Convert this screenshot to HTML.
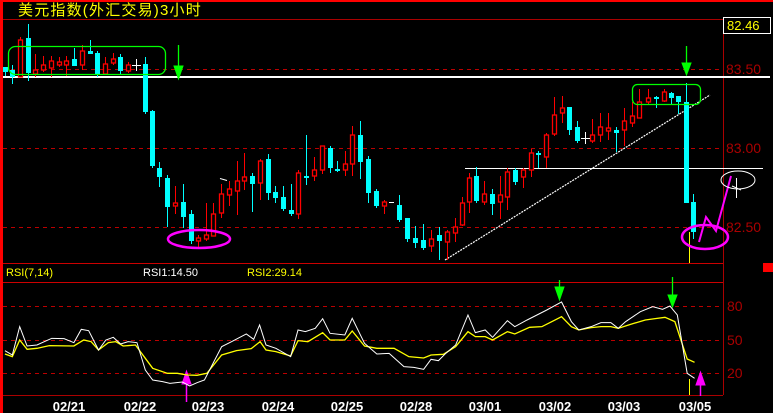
<!DOCTYPE html>
<html><head><meta charset="utf-8"><style>
html,body{margin:0;padding:0;background:#000;width:773px;height:413px;overflow:hidden}
svg{display:block}
text{font-family:"Liberation Sans","Noto Sans CJK SC",sans-serif}
</style></head><body>
<svg width="773" height="413" viewBox="0 0 773 413" xmlns="http://www.w3.org/2000/svg">
<rect width="773" height="413" fill="#000"/>
<rect x="0" y="0" width="773" height="2" fill="#f00"/>
<rect x="0" y="0" width="3" height="413" fill="#f00"/>
<line x1="3" y1="19.5" x2="723" y2="19.5" stroke="#a00" stroke-width="1"/>
<line x1="723.5" y1="19" x2="723.5" y2="395" stroke="#a00" stroke-width="1"/>
<line x1="3" y1="263.5" x2="723" y2="263.5" stroke="#c00" stroke-width="1"/>
<line x1="3" y1="282.5" x2="723" y2="282.5" stroke="#c00" stroke-width="1"/>
<line x1="3" y1="395.5" x2="723" y2="395.5" stroke="#a00" stroke-width="1"/>
<rect x="763" y="263" width="10" height="9" fill="#f00"/>
<g stroke="#b00" stroke-width="1" stroke-dasharray="4,4">
<line x1="3" y1="69.5" x2="723" y2="69.5"/>
<line x1="3" y1="148.5" x2="723" y2="148.5"/>
<line x1="3" y1="227.5" x2="723" y2="227.5"/>
<line x1="3" y1="306.5" x2="723" y2="306.5"/>
<line x1="3" y1="340.5" x2="723" y2="340.5"/>
<line x1="3" y1="373.5" x2="723" y2="373.5"/>
</g>
<text x="18" y="15" fill="#ff0" font-size="15" letter-spacing="1.2">美元指数(外汇交易)3小时</text>
<rect x="723.5" y="17.5" width="47" height="16" fill="#000" stroke="#fff" stroke-width="1"/>
<text x="727" y="30" fill="#ff0" font-size="13">82.46</text>
<g fill="#a00" font-size="14">
<text x="726" y="74">83.50</text><text x="726" y="153">83.00</text><text x="726" y="232">82.50</text>
<text x="727" y="311">80</text><text x="727" y="345">50</text><text x="727" y="378">20</text>
</g>
<rect x="3" y="76" width="767" height="2" fill="#fff"/>
<line x1="465" y1="168.5" x2="763" y2="168.5" stroke="#fff" stroke-width="1"/>
<line x1="445" y1="260" x2="710" y2="95" stroke="#fff" stroke-width="1.2" stroke-dasharray="2,1"/>
<g stroke="#0ff" stroke-width="1">
<line x1="5.5" y1="67" x2="5.5" y2="76"/><line x1="12.5" y1="65" x2="12.5" y2="84"/><line x1="28.5" y1="24" x2="28.5" y2="81"/>
<line x1="74.5" y1="48" x2="74.5" y2="66"/><line x1="90.5" y1="40" x2="90.5" y2="54"/><line x1="97.5" y1="51" x2="97.5" y2="77"/>
<line x1="120.5" y1="54" x2="120.5" y2="74"/><line x1="145.5" y1="57" x2="145.5" y2="114"/><line x1="152.5" y1="110" x2="152.5" y2="168"/>
<line x1="159.5" y1="162" x2="159.5" y2="187"/><line x1="167.5" y1="175" x2="167.5" y2="227"/><line x1="183.5" y1="184" x2="183.5" y2="228"/>
<line x1="191.5" y1="210" x2="191.5" y2="244"/><line x1="252.5" y1="173" x2="252.5" y2="212"/><line x1="268.5" y1="154" x2="268.5" y2="200"/>
<line x1="275.5" y1="186" x2="275.5" y2="203"/><line x1="283.5" y1="186" x2="283.5" y2="211"/><line x1="291.5" y1="184" x2="291.5" y2="216"/>
<line x1="306.5" y1="135" x2="306.5" y2="185"/><line x1="330.5" y1="146" x2="330.5" y2="173"/><line x1="337.5" y1="161" x2="337.5" y2="172"/>
<line x1="360.5" y1="121" x2="360.5" y2="179"/><line x1="368.5" y1="156" x2="368.5" y2="203"/><line x1="376.5" y1="189" x2="376.5" y2="208"/>
<line x1="399.5" y1="195" x2="399.5" y2="222"/><line x1="407.5" y1="218" x2="407.5" y2="242"/><line x1="415.5" y1="226" x2="415.5" y2="248"/>
<line x1="423.5" y1="224" x2="423.5" y2="250"/><line x1="439.5" y1="227" x2="439.5" y2="260"/><line x1="476.5" y1="167" x2="476.5" y2="203"/>
<line x1="492.5" y1="189" x2="492.5" y2="215"/><line x1="515.5" y1="168" x2="515.5" y2="185"/><line x1="538.5" y1="151" x2="538.5" y2="168"/>
<line x1="569.5" y1="107" x2="569.5" y2="135"/><line x1="577.5" y1="121" x2="577.5" y2="143"/><line x1="616.5" y1="127" x2="616.5" y2="152"/>
<line x1="656.5" y1="96" x2="656.5" y2="108"/><line x1="671.5" y1="92" x2="671.5" y2="105"/><line x1="678.5" y1="96" x2="678.5" y2="114"/>
<line x1="686.5" y1="83" x2="686.5" y2="203"/><line x1="693.5" y1="194" x2="693.5" y2="239"/>
</g>
<g fill="#0ff">
<rect x="3" y="67" width="5" height="5"/><rect x="10" y="70" width="5" height="7"/><rect x="26" y="38" width="5" height="35"/>
<rect x="72" y="59" width="5" height="7"/><rect x="88" y="51" width="5" height="3"/><rect x="95" y="53" width="5" height="21"/>
<rect x="118" y="57" width="5" height="14"/><rect x="143" y="64" width="5" height="48"/><rect x="150" y="111" width="5" height="55"/>
<rect x="157" y="168" width="5" height="9"/><rect x="165" y="178" width="5" height="29"/><rect x="181" y="202" width="5" height="15"/>
<rect x="189" y="214" width="5" height="27"/><rect x="250" y="176" width="5" height="8"/><rect x="266" y="159" width="5" height="34"/>
<rect x="273" y="192" width="5" height="6"/><rect x="281" y="197" width="5" height="12"/><rect x="289" y="210" width="5" height="4"/>
<rect x="304" y="176" width="5" height="2"/><rect x="328" y="148" width="5" height="20"/><rect x="335" y="169" width="5" height="2"/>
<rect x="358" y="135" width="5" height="27"/><rect x="366" y="159" width="5" height="34"/><rect x="374" y="191" width="5" height="15"/>
<rect x="397" y="205" width="5" height="15"/><rect x="405" y="218" width="5" height="21"/><rect x="413" y="238" width="5" height="5"/>
<rect x="421" y="240" width="5" height="8"/><rect x="437" y="235" width="5" height="6"/><rect x="474" y="176" width="5" height="25"/>
<rect x="490" y="194" width="5" height="10"/><rect x="513" y="170" width="5" height="12"/><rect x="536" y="153" width="5" height="2"/>
<rect x="567" y="107" width="5" height="23"/><rect x="575" y="127" width="5" height="14"/><rect x="614" y="130" width="5" height="3"/>
<rect x="654" y="97" width="5" height="2"/><rect x="669" y="93" width="5" height="5"/><rect x="676" y="96" width="5" height="6"/>
<rect x="684" y="102" width="5" height="101"/><rect x="691" y="202" width="5" height="30"/>
</g>
<g stroke="#f00" stroke-width="1">
<line x1="20.5" y1="37" x2="20.5" y2="77"/><line x1="35.5" y1="54" x2="35.5" y2="77"/><line x1="43.5" y1="56" x2="43.5" y2="72"/>
<line x1="51.5" y1="56" x2="51.5" y2="77"/><line x1="59.5" y1="57" x2="59.5" y2="67"/><line x1="66.5" y1="56" x2="66.5" y2="76"/>
<line x1="82.5" y1="45" x2="82.5" y2="70"/><line x1="105.5" y1="57" x2="105.5" y2="74"/><line x1="113.5" y1="53" x2="113.5" y2="65"/>
<line x1="128.5" y1="62" x2="128.5" y2="73"/><line x1="175.5" y1="186" x2="175.5" y2="214"/><line x1="198.5" y1="235" x2="198.5" y2="248"/>
<line x1="206.5" y1="203" x2="206.5" y2="241"/><line x1="213.5" y1="203" x2="213.5" y2="236"/><line x1="221.5" y1="184" x2="221.5" y2="218"/>
<line x1="229.5" y1="181" x2="229.5" y2="206"/><line x1="237.5" y1="161" x2="237.5" y2="215"/><line x1="244.5" y1="153" x2="244.5" y2="190"/>
<line x1="260.5" y1="159" x2="260.5" y2="200"/><line x1="298.5" y1="170" x2="298.5" y2="219"/><line x1="314.5" y1="157" x2="314.5" y2="181"/>
<line x1="322.5" y1="146" x2="322.5" y2="174"/><line x1="345.5" y1="151" x2="345.5" y2="176"/><line x1="352.5" y1="126" x2="352.5" y2="176"/>
<line x1="384.5" y1="200" x2="384.5" y2="214"/><line x1="431.5" y1="230" x2="431.5" y2="252"/><line x1="447.5" y1="230" x2="447.5" y2="260"/>
<line x1="455.5" y1="218" x2="455.5" y2="242"/><line x1="462.5" y1="197" x2="462.5" y2="226"/><line x1="469.5" y1="173" x2="469.5" y2="213"/>
<line x1="484.5" y1="181" x2="484.5" y2="205"/><line x1="500.5" y1="176" x2="500.5" y2="219"/><line x1="507.5" y1="168" x2="507.5" y2="210"/>
<line x1="523.5" y1="168" x2="523.5" y2="188"/><line x1="531.5" y1="149" x2="531.5" y2="177"/><line x1="546.5" y1="133" x2="546.5" y2="168"/>
<line x1="554.5" y1="97" x2="554.5" y2="136"/><line x1="562.5" y1="96" x2="562.5" y2="123"/><line x1="592.5" y1="119" x2="592.5" y2="143"/>
<line x1="600.5" y1="113" x2="600.5" y2="142"/><line x1="608.5" y1="113" x2="608.5" y2="140"/><line x1="624.5" y1="108" x2="624.5" y2="146"/>
<line x1="632.5" y1="102" x2="632.5" y2="127"/><line x1="639.5" y1="89" x2="639.5" y2="118"/><line x1="648.5" y1="89" x2="648.5" y2="104"/>
<line x1="664.5" y1="89" x2="664.5" y2="102"/>
</g>
<g stroke="#f00" stroke-width="1.3" fill="#000">
<rect x="18.5" y="40" width="4" height="37"/><rect x="33.5" y="70" width="4" height="4"/><rect x="41.5" y="65" width="4" height="5"/>
<rect x="49.5" y="61" width="4" height="7"/><rect x="57.5" y="62" width="4" height="3"/><rect x="64.5" y="61" width="4" height="4"/>
<rect x="80.5" y="51" width="4" height="14"/><rect x="103.5" y="64" width="4" height="10"/><rect x="111.5" y="59" width="4" height="4"/>
<rect x="126.5" y="65" width="4" height="6"/><rect x="173.5" y="203" width="4" height="3"/><rect x="196.5" y="238" width="4" height="3"/>
<rect x="204.5" y="235" width="4" height="4"/><rect x="211.5" y="214" width="4" height="22"/><rect x="219.5" y="194" width="4" height="19"/>
<rect x="227.5" y="189" width="4" height="6"/><rect x="235.5" y="181" width="4" height="10"/><rect x="242.5" y="177" width="4" height="4"/>
<rect x="258.5" y="161" width="4" height="22"/><rect x="296.5" y="173" width="4" height="41"/><rect x="312.5" y="170" width="4" height="6"/>
<rect x="320.5" y="146" width="4" height="24"/><rect x="343.5" y="164" width="4" height="6"/><rect x="350.5" y="135" width="4" height="29"/>
<rect x="382.5" y="202" width="4" height="4"/><rect x="429.5" y="239" width="4" height="7"/><rect x="445.5" y="232" width="4" height="10"/>
<rect x="453.5" y="227" width="4" height="6"/><rect x="460.5" y="203" width="4" height="22"/><rect x="467.5" y="178" width="4" height="24"/>
<rect x="482.5" y="194" width="4" height="8"/><rect x="498.5" y="195" width="4" height="7"/><rect x="505.5" y="172" width="4" height="25"/>
<rect x="521.5" y="170" width="4" height="7"/><rect x="529.5" y="153" width="4" height="17"/><rect x="544.5" y="135" width="4" height="22"/>
<rect x="552.5" y="115" width="4" height="19"/><rect x="560.5" y="108" width="4" height="5"/><rect x="590.5" y="135" width="4" height="6"/>
<rect x="598.5" y="127" width="4" height="8"/><rect x="606.5" y="128" width="4" height="3"/><rect x="622.5" y="121" width="4" height="9"/>
<rect x="630.5" y="116" width="4" height="7"/><rect x="637.5" y="102" width="4" height="16"/><rect x="646.5" y="98" width="4" height="4"/>
<rect x="662.5" y="92" width="4" height="9"/>
</g>
<g stroke="#fff" stroke-width="1">
<line x1="136.5" y1="59" x2="136.5" y2="71"/><line x1="132" y1="65.5" x2="141" y2="65.5"/>
<line x1="585.5" y1="132" x2="585.5" y2="144"/><line x1="581" y1="138.5" x2="590" y2="138.5"/>
<line x1="220" y1="178.5" x2="227" y2="180.5"/><line x1="389" y1="202.5" x2="394" y2="202.5"/>
<line x1="736.5" y1="178" x2="736.5" y2="198"/><line x1="732" y1="186" x2="741" y2="190"/>
</g>
<line x1="689.5" y1="232" x2="689.5" y2="263" stroke="#ff0" stroke-width="1"/>
<rect x="8.5" y="46.5" width="157" height="28" rx="7" fill="none" stroke="#0f0" stroke-width="1.3"/>
<rect x="632.5" y="84.5" width="68" height="20" rx="5" fill="none" stroke="#0f0" stroke-width="1.3"/>
<g stroke="#0f0" fill="#0f0">
<line x1="178.5" y1="45" x2="178.5" y2="68" stroke-width="1.3"/><polygon points="174,66 183,66 178.5,79"/>
<line x1="686.5" y1="46" x2="686.5" y2="64" stroke-width="1.3"/><polygon points="682,63 691,63 686.5,75"/>
<line x1="559.5" y1="280" x2="559.5" y2="290" stroke-width="1.3"/><polygon points="555,287 564,287 559.5,300"/>
<line x1="672.5" y1="277" x2="672.5" y2="296" stroke-width="1.3"/><polygon points="668,295 677,295 672.5,307"/>
</g>
<ellipse cx="199" cy="239" rx="31" ry="9" fill="none" stroke="#f0f" stroke-width="2.5"/>
<ellipse cx="705" cy="237" rx="23" ry="12" fill="none" stroke="#f0f" stroke-width="2.5"/>
<polyline points="699,242 706,217 716,231 731,176" fill="none" stroke="#f0f" stroke-width="2"/>
<ellipse cx="738" cy="180" rx="17" ry="9" fill="none" stroke="#fff" stroke-width="1"/>
<g stroke="#f0f" fill="#f0f">
<line x1="186.5" y1="380" x2="186.5" y2="402" stroke-width="1.5"/><polygon points="182,384 191,384 186.5,371"/>
<line x1="700.5" y1="380" x2="700.5" y2="396" stroke-width="1.5"/><polygon points="696,385 705,385 700.5,372"/>
</g>
<line x1="689.5" y1="379" x2="689.5" y2="395" stroke="#ff0" stroke-width="1"/>
<g transform="translate(0,260) scale(0.4926,0.3333)" fill="none">
<polyline vector-effect="non-scaling-stroke" stroke="#ff0" stroke-width="1.3" points="10,282 25,290 40,240 55,268 75,265 100,257 150,258 170,240 185,245 200,270 220,248 235,245 250,258 275,255 295,295 310,325 340,340 360,340 380,345 400,346 420,340 450,285 480,272 510,266 528,245 540,270 560,275 590,288 605,242 625,245 655,218 670,240 700,240 715,213 740,258 765,265 800,265 830,290 860,294 875,285 900,283 925,260 950,215 965,230 985,230 1000,240 1030,215 1045,222 1075,202 1100,200 1120,185 1140,170 1160,200 1175,210 1200,203 1220,200 1240,200 1255,205 1280,193 1310,180 1330,176 1350,172 1370,185 1395,297 1410,307"/>
<polyline vector-effect="non-scaling-stroke" stroke="#fff" stroke-width="1" points="10,272 25,285 40,200 55,258 75,255 105,235 130,236 150,248 165,208 180,212 200,270 215,240 230,232 245,252 260,245 278,248 295,330 310,360 330,365 345,370 370,366 385,378 400,368 415,360 450,260 470,245 500,222 515,238 527,195 540,255 560,265 590,290 605,210 620,215 640,205 655,176 670,220 700,225 715,175 740,250 765,282 790,280 820,320 840,322 860,328 875,298 890,302 905,280 925,255 950,165 965,218 985,210 1000,232 1030,182 1045,200 1070,180 1090,165 1110,150 1140,126 1160,185 1175,210 1200,200 1220,188 1240,188 1255,205 1270,185 1300,155 1325,140 1345,148 1360,138 1375,165 1395,340 1410,355"/>
</g>
<text x="6" y="276" fill="#ff0" font-size="11">RSI(7,14)</text>
<text x="143" y="276" fill="#fff" font-size="11">RSI1:14.50</text>
<text x="247" y="276" fill="#ff0" font-size="11">RSI2:29.14</text>
<g fill="#fff" font-size="13" font-weight="bold" text-anchor="middle">
<text x="69" y="411" font-family="Liberation Mono, monospace">02/21</text>
<text x="140" y="411" font-family="Liberation Mono, monospace">02/22</text>
<text x="208" y="411" font-family="Liberation Mono, monospace">02/23</text>
<text x="278" y="411" font-family="Liberation Mono, monospace">02/24</text>
<text x="347" y="411" font-family="Liberation Mono, monospace">02/25</text>
<text x="416" y="411" font-family="Liberation Mono, monospace">02/28</text>
<text x="485" y="411" font-family="Liberation Mono, monospace">03/01</text>
<text x="555" y="411" font-family="Liberation Mono, monospace">03/02</text>
<text x="624" y="411" font-family="Liberation Mono, monospace">03/03</text>
<text x="695" y="411" font-family="Liberation Mono, monospace">03/05</text>
</g>
</svg>
</body></html>
